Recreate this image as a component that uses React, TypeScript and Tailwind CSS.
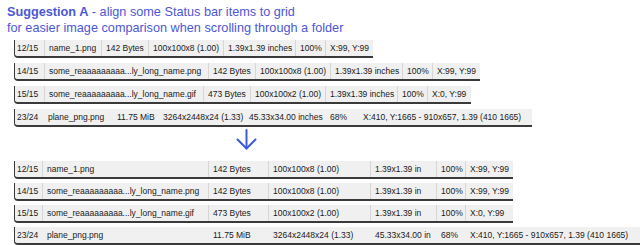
import React from "react";

const font = { fontFamily: '"Segoe UI", "Liberation Sans", Arial, sans-serif' };

type Cell = [string, string];

const sep = "border-r border-[#d6d6d6]";

const topRows: Cell[][] = [
  [
    ["12/15", "w-[30px]"],
    ["name_1.png", "w-[57px]"],
    ["142 Bytes", "w-[47px]"],
    ["100x100x8 (1.00)", "w-[75px]"],
    ["1.39x1.39 inches", "w-[72px]"],
    ["100%", "w-[30px]"],
    ["X:99, Y:99", "w-[47px]"],
  ],
  [
    ["14/15", "w-[30px]"],
    ["some_reaaaaaaaaa...ly_long_name.png", "w-[164px]"],
    ["142 Bytes", "w-[47px]"],
    ["100x100x8 (1.00)", "w-[75px]"],
    ["1.39x1.39 inches", "w-[72px]"],
    ["100%", "w-[30px]"],
    ["X:99, Y:99", "w-[47px]"],
  ],
  [
    ["15/15", "w-[30px]"],
    ["some_reaaaaaaaaa...ly_long_name.gif", "w-[159px]"],
    ["473 Bytes", "w-[47px]"],
    ["100x100x2 (1.00)", "w-[75px]"],
    ["1.39x1.39 inches", "w-[72px]"],
    ["100%", "w-[30px]"],
    ["X:0, Y:99", "w-[43px]"],
  ],
];

const topLast: Cell[] = [
  ["23/24", "w-[29px]"],
  ["plane_png.png", "w-[69px]"],
  ["11.75 MiB", "w-[46px]"],
  ["3264x2448x24 (1.33)", "w-[86px]"],
  ["45.33x34.00 inches", "w-[81px]"],
  ["68%", "w-[33px]"],
  ["X:410, Y:1665 - 910x657, 1.39 (410 1665)", "w-[173px]"],
];

const bottomRows: string[][] = [
  ["12/15", "name_1.png", "142 Bytes", "100x100x8 (1.00)", "1.39x1.39 in", "100%", "X:99, Y:99"],
  ["14/15", "some_reaaaaaaaaa...ly_long_name.png", "142 Bytes", "100x100x8 (1.00)", "1.39x1.39 in", "100%", "X:99, Y:99"],
  ["15/15", "some_reaaaaaaaaa...ly_long_name.gif", "473 Bytes", "100x100x2 (1.00)", "1.39x1.39 in", "100%", "X:0, Y:99"],
  ["23/24", "plane_png.png", "11.75 MiB", "3264x2448x24 (1.33)", "45.33x34.00 in", "68%", "X:410, Y:1665 - 910x657, 1.39 (410 1665)"],
];

const colW = ["w-[28px]", "w-[166px]", "w-[60px]", "w-[102px]", "w-[66px]", "w-[29px]", "w-[47px]"];

const barBase =
  "flex h-[18px] items-center rounded-bl-[4px] border-b-2 border-l border-[#3a3a3a] bg-[#f0f0f0] text-[8.5px] text-[#1a1a1a]";

function TopBar({ cells, seps }: { cells: Cell[]; seps: boolean }) {
  return (
    <div className={barBase + " w-fit"}>
      {cells.map(([t, w], i) => (
        <div
          key={i}
          className={
            "flex h-full shrink-0 items-center whitespace-nowrap " +
            (seps ? "overflow-hidden " : "") +
            (i === 0 ? "pl-[2px] " : "pl-[4px] ") +
            w +
            " " +
            (seps && i < cells.length - 1 ? sep : "")
          }
        >
          {t}
        </div>
      ))}
    </div>
  );
}

function GridBar({ row, last }: { row: string[]; last: boolean }) {
  return (
    <div className={barBase + " " + (last ? "w-[626px]" : "w-[499px]")}>
      {row.map((c, i) => (
        <div
          key={i}
          className={
            "flex h-full shrink-0 items-center overflow-hidden whitespace-nowrap " +
            (i === 0 ? "pl-[2px] " : "pl-[4px] ") +
            (i === row.length - 1 && last ? "flex-1" : colW[i]) +
            " " +
            (i < row.length - 1 && !last ? sep : "")
          }
        >
          {c}
        </div>
      ))}
    </div>
  );
}

export default function App() {
  return (
    <div className="h-[245px] w-[640px] overflow-hidden bg-white" style={font}>
      <div className="px-[7px] pt-[4px] text-[12.7px] leading-[16px] text-[#4c57d6]">
        <div>
          <span className="font-bold">Suggestion A</span> - align some Status bar items to grid
        </div>
        <div>for easier image comparison when scrolling through a folder</div>
      </div>
      <div className="ml-[14px] mt-[4px] flex flex-col gap-[5px]">
        {topRows.map((r, i) => (
          <TopBar key={i} cells={r} seps />
        ))}
        <TopBar cells={topLast} seps={false} />
      </div>
      <div className="flex h-[34px] items-start pl-[236px] pt-[2px]">
        <svg width="21" height="21" viewBox="0 0 21 21" fill="none" stroke="#3d5ad8" strokeWidth="2" strokeLinecap="round" strokeLinejoin="round">
          <path d="M10.5 1v18.5" />
          <path d="M1.5 10.5l9 9 9-9" />
        </svg>
      </div>
      <div className="ml-[14px] flex flex-col gap-[4px]">
        {bottomRows.map((r, i) => (
          <GridBar key={i} row={r} last={i === 3} />
        ))}
      </div>
    </div>
  );
}
